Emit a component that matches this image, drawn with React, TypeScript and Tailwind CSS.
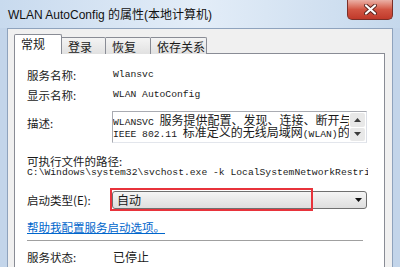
import React from 'react';

const mono = "font-['Liberation_Mono','Noto_Sans_CJK_SC',monospace] text-[9.7px]";
const cjk = "font-['Noto_Sans_CJK_SC',sans-serif] text-[12px]";
const label = "font-['Noto_Sans_CJK_SC',sans-serif] text-[11.5px]";

function CloseButton() {
  return (
    <div className="ml-auto mr-[7px] self-start w-[46px] h-[20px] rounded-b-[5px] border border-t-0 border-[#7a2f28] bg-gradient-to-b from-[#eab0a6] via-[#d25543] to-[#c0392a] flex items-center justify-center">
      <svg width="13" height="11" viewBox="0 0 13 11">
        <path d="M2 1.5 L11 9.5 M11 1.5 L2 9.5" stroke="#5a241e" strokeWidth="4" strokeLinecap="round" />
        <path d="M2 1.5 L11 9.5 M11 1.5 L2 9.5" stroke="#ffffff" strokeWidth="2.2" strokeLinecap="round" />
      </svg>
    </div>
  );
}

function Tab({ text, active, width }: { text: string; active?: boolean; width: string }) {
  if (active) {
    return (
      <div className={`${width} h-[20px] border border-b-0 border-[#898c95] bg-white rounded-t-[2px] pl-[6px] pt-[1px] leading-[16px] ${cjk} relative z-10`}>
        {text}
      </div>
    );
  }
  return (
    <div className={`${width} h-[17px] border border-b-0 border-l-0 border-[#898c95] bg-gradient-to-b from-[#f4f4f4] to-[#e1e1e1] rounded-tr-[2px] pl-[6px] leading-[17px] ${cjk}`}>
      {text}
    </div>
  );
}

function Arrow({ up }: { up?: boolean }) {
  return (
    <svg width="7" height="4" viewBox="0 0 7 4">
      <path d={up ? 'M0 4 L3.5 0 L7 4 Z' : 'M0 0 L7 0 L3.5 4 Z'} fill="#3c3c3c" />
    </svg>
  );
}

export default function App() {
  return (
    <div className="w-[400px] h-[267px] overflow-hidden bg-[#c3d5ea] text-[#1a1a1a]">
      {/* title bar */}
      <div className="h-[28px] flex items-center bg-gradient-to-r from-[#c8daee] via-[#e3edf8] to-[#c5d8ec]">
        <span className="pl-[8px] pt-[2px] text-[12px] leading-none font-['Liberation_Sans','Noto_Sans_CJK_SC',sans-serif] text-[#111]">
          WLAN AutoConfig 的属性(本地计算机)
        </span>
        <CloseButton />
      </div>

      {/* client area */}
      <div className="mx-[7px] h-[239px] bg-[#f0f0f0] border border-b-0 border-[#8fa3bd] pl-[6px] pt-[5px]">
        <div className="flex items-end h-[20px] -mb-px relative z-10">
          <Tab text="常规" active width="w-[48px]" />
          <Tab text="登录" width="w-[44px]" />
          <Tab text="恢复" width="w-[45px]" />
          <Tab text="依存关系" width="w-[56px]" />
        </div>

        <div className="w-[371px] h-[240px] border border-[#898c95] bg-white pl-[12px] pt-[13px]">
          <div className="flex items-center h-[16px]">
            <div className={`w-[85px] leading-[16px] ${label}`}>服务名称:</div>
            <div className={`pl-[1px] ${mono}`}>Wlansvc</div>
          </div>
          <div className="flex items-center h-[16px] mt-[4px]">
            <div className={`w-[85px] leading-[16px] ${label}`}>显示名称:</div>
            <div className={`pl-[1px] ${mono}`}>WLAN AutoConfig</div>
          </div>

          <div className="flex items-start mt-[8px]">
            <div className={`w-[85px] mt-[4px] leading-[16px] ${label}`}>描述:</div>
            <div className="w-[255px] h-[32px] border border-[#a9abb2] border-r-[#dcdfe6] border-b-[#e3e6ec] flex">
              <div className="w-[236px] pt-[2px] overflow-hidden whitespace-nowrap">
                <div className="h-[11px] leading-[11px]">
                  <span className={`${mono} leading-[11px]`}>WLANSVC </span>
                  <span className={`${cjk} leading-[11px]`}>服务提供配置、发现、连接、断开与</span>
                </div>
                <div className="h-[11px] leading-[11px] mt-[1px]">
                  <span className={`${mono} leading-[11px]`}>IEEE 802.11 </span>
                  <span className={`${cjk} leading-[11px]`}>标准定义的无线局域网</span>
                  <span className={`${mono} leading-[11px]`}>(WLAN)</span>
                  <span className={`${cjk} leading-[11px]`}>的</span>
                </div>
              </div>
              <div className="ml-auto w-[16px] flex flex-col gap-[1px] py-[1px] pr-[1px]">
                <div className="h-[14px] bg-[#e8e8e8] rounded-[2px] flex items-center justify-center">
                  <Arrow up />
                </div>
                <div className="h-[14px] bg-[#e8e8e8] rounded-[2px] flex items-center justify-center">
                  <Arrow />
                </div>
              </div>
            </div>
          </div>

          <div className={`mt-[12px] leading-[12px] ${label}`}>可执行文件的路径:</div>
          <div className={`w-[341px] overflow-hidden whitespace-nowrap leading-[12px] ${mono}`}>
            C:\Windows\system32\svchost.exe -k LocalSystemNetworkRestricted
          </div>

          <div className="flex items-center mt-[12px] h-[18px]">
            <div className={`w-[85px] leading-[16px] ${label}`}>启动类型(E):</div>
            <div className="relative">
              <div className="w-[255px] h-[18px] border border-[#707070] rounded-[3px] bg-gradient-to-b from-[#f5f5f5] to-[#dedede] flex items-center pl-[4px] pr-[4px]">
                <span className={`leading-[16px] ${cjk}`}>自动</span>
                <svg className="ml-auto" width="7" height="4" viewBox="0 0 7 4">
                  <path d="M0 0 L7 0 L3.5 4 Z" fill="#111" />
                </svg>
              </div>
              <div className="absolute -left-[2px] -top-[3px] w-[203px] h-[23px] border-2 border-[#e8333b]" />
            </div>
          </div>

          <div className={`mt-[10px] leading-[16px] text-[#0066cc] underline ${label}`}>帮助我配置服务启动选项。</div>

          <div className="mt-[5px] w-[336px] h-px bg-[#a0a0a0]" />

          <div className="flex items-center h-[16px] mt-[8px]">
            <div className={`w-[85px] leading-[16px] ${label}`}>服务状态:</div>
            <div className={`pl-[1px] leading-[16px] ${cjk}`}>已停止</div>
          </div>
        </div>
      </div>
    </div>
  );
}
